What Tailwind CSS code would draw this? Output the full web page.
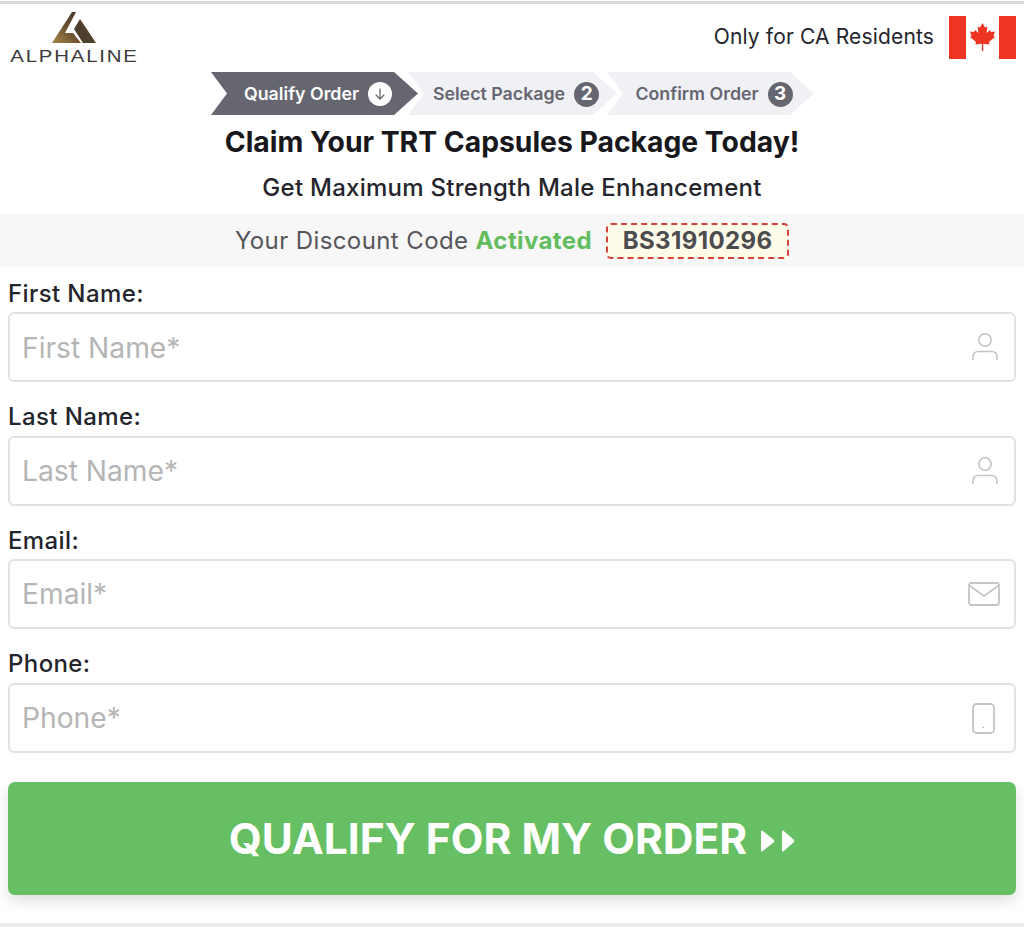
<!DOCTYPE html>
<html lang="en">
<head>
    <meta charset="UTF-8">
    <meta name="viewport" content="width=device-width, initial-scale=1.0">
    <title>Qualify Order</title>
    <script src="https://cdn.jsdelivr.net/npm/@tailwindcss/browser@4"></script>
</head>
<body class="bg-white font-['Inter',sans-serif] h-[927px] overflow-hidden flex flex-col">

    <div class="mt-[1px] h-[3px] bg-[#d9d9d9]"></div>

    <!-- Header -->
    <header class="h-[68px] flex justify-between pl-[10px] pr-2">
        <div class="flex flex-col items-center w-[128px] pt-[8px]">
            <svg width="44" height="32" viewBox="0 0 44 32">
                <defs>
                    <linearGradient id="gold" x1="0" y1="1" x2="1" y2="0">
                        <stop offset="0" stop-color="#a98648"/>
                        <stop offset="0.5" stop-color="#6b5130"/>
                        <stop offset="1" stop-color="#3d3128"/>
                    </linearGradient>
                </defs>
                <path d="M0 31 L20 0 L24 0 L13 21 L21 21 L29 31 Z" fill="url(#gold)"/>
                <path d="M28 7 L44 31 L31 31 L22 17 Z" fill="#4f3f2d"/>
            </svg>
            <span class="font-['Liberation_Sans',sans-serif] text-[17px] leading-[16px] tracking-[1.5px] text-[#3a3a3c] mt-[5px] ml-[2px] whitespace-nowrap scale-x-[1.2]">ALPHALINE</span>
        </div>
        <div class="flex items-center gap-[15px] pt-[4px] pb-[6px]">
            <span class="text-[21px] tracking-[0.15px] text-[#24242c] mt-[-1px]">Only for CA Residents</span>
            <svg width="67" height="43" viewBox="0 0 67 43">
                <rect width="67" height="43" fill="#fff"/>
                <rect width="17" height="43" fill="#ee3524"/>
                <rect x="50" width="17" height="43" fill="#ee3524"/>
                <path d="M33.5 7 L36 11.5 L38.5 10.5 L37.5 17 L41 14 L42 16 L46 15.5 L44.5 20 L46 21 L40 26 L40.5 28.5 L34.2 27.8 L34.2 35 L32.8 35 L32.8 27.8 L26.5 28.5 L27 26 L21 21 L22.5 20 L21 15.5 L25 16 L26 14 L29.5 17 L28.5 10.5 L31 11.5 Z" fill="#ee3524"/>
            </svg>
        </div>
    </header>

    <!-- Steps -->
    <div class="h-[43px] flex justify-center pl-[1px] text-[17.8px] font-semibold">
        <div class="w-[207px] h-[43px] bg-[#666671] text-white flex items-center justify-center gap-[9px] pl-[20px] pr-[13px] pt-[1px] [clip-path:polygon(0_0,183px_0,100%_50%,183px_100%,0_100%,16px_50%)]">
            <span>Qualify Order</span>
            <span class="w-[24px] h-[24px] rounded-full bg-white flex items-center justify-center">
                <svg width="14" height="14" viewBox="0 0 14 14" fill="none" stroke="#666671" stroke-width="1.3"><path d="M7 1.5V12M2.8 7.8L7 12L11.2 7.8"/></svg>
            </span>
        </div>
        <div class="w-[209px] h-[43px] ml-[-10px] bg-[#f0f1f5] text-[#666671] flex items-center justify-center gap-[9px] pl-[20px] pr-[13px] pt-[1px] [clip-path:polygon(0_0,185px_0,100%_50%,185px_100%,0_100%,16px_50%)]">
            <span>Select Package</span>
            <span class="w-[25px] h-[25px] rounded-full bg-[#666671] text-white text-[19px] font-bold flex items-center justify-center">2</span>
        </div>
        <div class="w-[207px] h-[43px] ml-[-10px] bg-[#f0f1f5] text-[#666671] flex items-center justify-center gap-[9px] pl-[20px] pr-[13px] pt-[1px] [clip-path:polygon(0_0,183px_0,100%_50%,183px_100%,0_100%,16px_50%)]">
            <span>Confirm Order</span>
            <span class="w-[25px] h-[25px] rounded-full bg-[#666671] text-white text-[19px] font-bold flex items-center justify-center">3</span>
        </div>
    </div>

    <!-- Headline -->
    <h1 class="mt-[9px] h-[36px] leading-[36px] text-center text-[28.3px] font-bold text-[#17171c]">Claim Your TRT Capsules Package Today!</h1>
    <p class="mt-[12px] h-[32px] leading-[32px] text-center text-[24px] tracking-[0.27px] font-medium text-[#24242c]">Get Maximum Strength Male Enhancement</p>

    <!-- Discount -->
    <div class="mt-[10px] h-[53px] bg-[#f7f7f7] flex items-center justify-center gap-[14px] text-[24px] tracking-[0.4px] text-[#55555a]">
        <span>Your Discount Code <b class="font-bold text-[#63bd5f]">Activated</b></span>
        <span class="w-[183px] h-[36px] rounded-[5px] border-2 border-dashed border-[#d4423c] bg-[#fefbe9] font-bold text-[#4c4c4f] flex items-center justify-center">BS31910296</span>
    </div>

    <!-- Form -->
    <form class="px-2 pt-[11px] flex flex-col">
        <label class="pt-[1px] text-[24px] tracking-[0.4px] leading-[30px] font-medium text-[#24242c] h-[34px]">First Name:</label>
        <div class="h-[70px] rounded-[6px] border-2 border-[#e2e2e2] flex items-center justify-between pl-[12px] pr-[15px] text-[28.2px] text-[#b5b5b5]">
            <span class="pt-[3px]">First Name*</span>
            <svg width="28" height="30" viewBox="0 0 28 30" fill="none" stroke="#c4c4c4" stroke-width="1.6"><circle cx="14" cy="8" r="6.2"/><path d="M2 28V24.5C2 21.5 4.5 19.5 7 19.5H21C23.5 19.5 26 21.5 26 24.5V28"/></svg>
        </div>
        <label class="mt-[19px] pt-[1px] text-[24px] tracking-[0.4px] leading-[30px] font-medium text-[#24242c] h-[35px]">Last Name:</label>
        <div class="h-[70px] rounded-[6px] border-2 border-[#e2e2e2] flex items-center justify-between pl-[12px] pr-[15px] text-[28.2px] text-[#b5b5b5]">
            <span class="pt-[1px]">Last Name*</span>
            <svg width="28" height="30" viewBox="0 0 28 30" fill="none" stroke="#c4c4c4" stroke-width="1.6"><circle cx="14" cy="8" r="6.2"/><path d="M2 28V24.5C2 21.5 4.5 19.5 7 19.5H21C23.5 19.5 26 21.5 26 24.5V28"/></svg>
        </div>
        <label class="mt-[19px] pt-[1px] text-[24px] tracking-[0.4px] leading-[30px] font-medium text-[#24242c] h-[34px]">Email:</label>
        <div class="h-[70px] rounded-[6px] border-2 border-[#e2e2e2] flex items-center justify-between pl-[12px] pr-[15px] text-[28.2px] text-[#b5b5b5]">
            <span class="pt-[1px]">Email*</span>
            <svg class="mr-[-1px]" width="32" height="24" viewBox="0 0 32 24" fill="none" stroke="#c4c4c4" stroke-width="1.8"><rect x="1" y="1" width="30" height="22" rx="2.5"/><path d="M2 4L16 14L30 4"/></svg>
        </div>
        <label class="mt-[19px] pt-[1px] text-[24px] tracking-[0.4px] leading-[30px] font-medium text-[#24242c] h-[35px]">Phone:</label>
        <div class="h-[70px] rounded-[6px] border-2 border-[#e2e2e2] flex items-center justify-between pl-[12px] pr-[15px] text-[28.2px] text-[#b5b5b5]">
            <span class="pt-[1px]">Phone*</span>
            <svg class="mr-[4px]" width="23" height="31" viewBox="0 0 23 31" fill="none" stroke="#c4c4c4" stroke-width="1.8"><rect x="1" y="1" width="21" height="29" rx="3.5"/><circle cx="11.5" cy="24.5" r="0.8" fill="#a8a8a8" stroke="none"/></svg>
        </div>
        <button type="button" class="mt-[29px] h-[113px] rounded-[7px] bg-[#66bf62] text-white text-[42.5px] font-bold flex items-center justify-center gap-[14px] shadow-[0_6px_14px_rgba(0,0,0,0.13)]">
            <span class="pt-[1px]">QUALIFY FOR MY ORDER</span>
            <svg class="mt-[4px]" width="34" height="22" viewBox="0 0 34 22" fill="#fff"><path d="M0 1.5Q0 0 1.5 0.8L12.5 9.5Q14 11 12.5 12.5L1.5 21.2Q0 22 0 20.5Z"/><path d="M21 1.5Q21 0 22.5 0.8L32.5 9.5Q34 11 32.5 12.5L22.5 21.2Q21 22 21 20.5Z"/></svg>
        </button>
    </form>

    <div class="mt-auto h-[4px] bg-[#ededed]"></div>

</body>
</html>
